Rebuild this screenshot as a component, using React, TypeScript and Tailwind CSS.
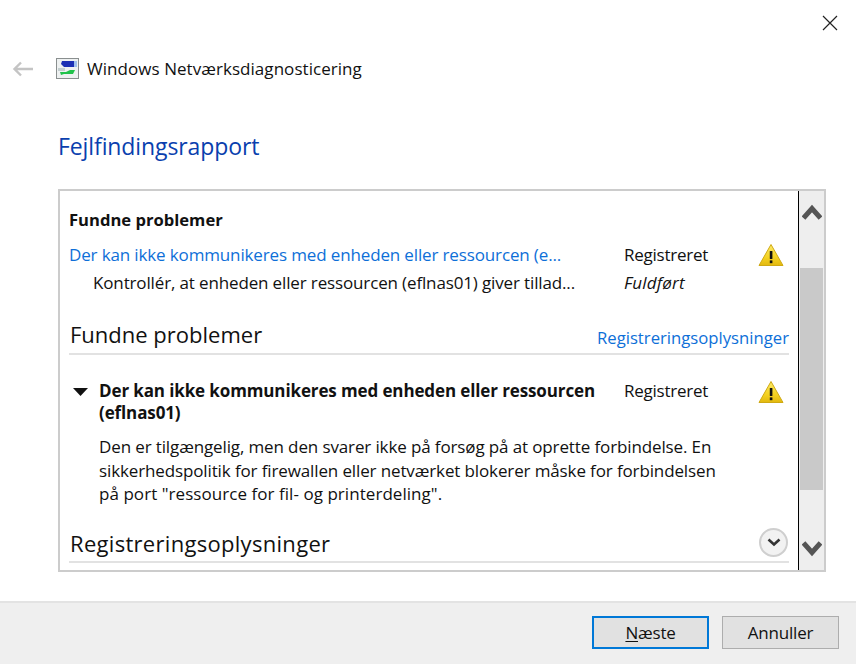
function Warn() {
  return (
    <svg width="26" height="24" viewBox="0 0 26 24" className="shrink-0">
      <defs>
        <linearGradient id="w" x1="0" y1="0" x2="0" y2="1">
          <stop offset="0" stopColor="#fbe96a" />
          <stop offset="0.6" stopColor="#f5d323" />
          <stop offset="1" stopColor="#e2b80f" />
        </linearGradient>
      </defs>
      <path d="M13 1.5 L25 22.5 H1 Z" fill="url(#w)" stroke="#cfa913" strokeWidth="1" strokeLinejoin="round" />
      <rect x="11.8" y="8" width="2.6" height="8" rx="0.6" fill="#111" />
      <rect x="11.8" y="17.4" width="2.6" height="2.8" fill="#111" />
    </svg>
  );
}

function AppIcon() {
  return (
    <svg width="24" height="22" viewBox="0 0 24 22">
      <rect x="0.5" y="0.5" width="22" height="20" fill="#eef1f1" stroke="#8a8f8f" />
      <path d="M6 3 H19 L18 9 H8 L5 6 Z" fill="#1c2fb4" />
      <rect x="18" y="3" width="3" height="6" fill="#9fc0ec" />
      <path d="M4 14 H10 L14 12 H19 L17 16 H8 L5 17 Z" fill="#1fc24a" />
      <rect x="2" y="10" width="7" height="3" fill="#c4cfd0" />
    </svg>
  );
}

export default function App() {
  return (
    <div className="flex h-[665px] w-[856px] flex-col bg-white font-['Open_Sans','Noto_Sans',sans-serif] text-[#111]">
      <div className="flex h-[49px] justify-end pr-[18px] pt-[15px]">
        <svg width="16" height="16" viewBox="0 0 16 16" fill="none" stroke="#222" strokeWidth="1.2">
          <path d="M1 1 L15 15 M15 1 L1 15" />
        </svg>
      </div>
      <div className="flex h-[40px] items-center pl-[12px]">
        <svg width="22" height="16" viewBox="0 0 22 16" fill="none" stroke="#c4c4c4" strokeWidth="2.4">
          <path d="M21 8 H2 M9 1.5 L2.5 8 L9 14.5" />
        </svg>
        <div className="ml-[22px]">
          <AppIcon />
        </div>
        <span className="ml-[7px] text-[17px] leading-[24px] tracking-[0.05px]">Windows Netværksdiagnosticering</span>
      </div>
      <h1 className="ml-[58px] mt-[41px] text-[23px] leading-[32px] tracking-[-0.1px] text-[#0a3fae]">Fejlfindingsrapport</h1>
      <div className="ml-[58px] mt-[27px] flex h-[383px] w-[768px] border-2 border-[#cccccc]">
        <div className="w-[738px] overflow-hidden pl-[9px] pr-[9px]">
          <div className="mt-[18px] text-[16.6px] font-bold leading-[22px]">Fundne problemer</div>
          <div className="mt-[12px] flex h-[24px] items-center text-[17px] leading-[24px] tracking-[-0.14px]">
            <span className="w-[555px] whitespace-nowrap text-[#0e6fd8]">Der kan ikke kommunikeres med enheden eller ressourcen (e...</span>
            <span className="w-[134px] tracking-[-0.25px]">Registreret</span>
            <Warn />
          </div>
          <div className="mt-[4px] flex h-[24px] items-center text-[17px] leading-[24px] tracking-[-0.14px]">
            <span className="w-[555px] whitespace-nowrap pl-[24px]">Kontrollér, at enheden eller ressourcen (eflnas01) giver tillad...</span>
            <span className="italic tracking-[0.2px]">Fuldført</span>
          </div>
          <div className="mt-[26px] flex h-[34px] items-end justify-between border-b-2 border-[#e2e2e2] pb-[4px]">
            <span className="ml-[1px] text-[22px] leading-[30px]">Fundne problemer</span>
            <span className="text-[16.7px] leading-[22px] text-[#0e6fd8]">Registreringsoplysninger</span>
          </div>
          <div className="mt-[25px] flex items-start">
            <svg width="15" height="9" viewBox="0 0 15 9" className="ml-[4px] mt-[8px] shrink-0">
              <path d="M0 0 H15 L7.5 8 Z" fill="#111" />
            </svg>
            <div className="ml-[11px] w-[525px] text-[17px] font-bold leading-[22px] tracking-[-0.12px]">
              Der kan ikke kommunikeres med enheden eller ressourcen (eflnas01)
            </div>
            <span className="w-[134px] text-[17px] leading-[22px] tracking-[-0.25px]">Registreret</span>
            <Warn />
          </div>
          <p className="ml-[30px] mt-[11px] whitespace-nowrap text-[17px] leading-[23.5px] tracking-[-0.125px]">
            Den er tilgængelig, men den svarer ikke på forsøg på at oprette forbindelse. En
            <br />
            sikkerhedspolitik for firewallen eller netværket blokerer måske for forbindelsen
            <br />
            <span className="tracking-[0.05px]">på port "ressource for fil- og printerdeling".</span>
          </p>
          <div className="mt-[19.5px] flex h-[38px] items-end justify-between border-b-2 border-[#e2e2e2] pb-[2px]">
            <span className="ml-[1px] text-[22px] leading-[32px] tracking-[0.3px]">Registreringsoplysninger</span>
            <span className="mb-[2px] mr-[1px] flex size-[29px] items-center justify-center rounded-full border-2 border-[#cfcfcf] bg-[#f2f2f2]">
              <svg width="14" height="9" viewBox="0 0 14 9" fill="none" stroke="#333" strokeWidth="2.6">
                <path d="M1.5 1.5 L7 6.5 L12.5 1.5" />
              </svg>
            </span>
          </div>
        </div>
        <div className="flex w-[26px] flex-col border-l border-black bg-[#eeeeee]">
          <div className="flex h-[77px] justify-center pt-[13px]">
            <svg width="20" height="16" viewBox="0 0 20 16" fill="none" stroke="#555" strokeWidth="5">
              <path d="M1.5 14 L10 4.5 L18.5 14" />
            </svg>
          </div>
          <div className="mx-[1px] h-[222px] bg-[#c9c9c9]" />
          <div className="flex flex-1 items-end justify-center pb-[13px]">
            <svg width="20" height="16" viewBox="0 0 20 16" fill="none" stroke="#555" strokeWidth="5">
              <path d="M1.5 2 L10 11.5 L18.5 2" />
            </svg>
          </div>
        </div>
      </div>
      <div className="mt-[29px] flex h-[63px] justify-end gap-[13px] border-t-2 border-[#e3e3e3] bg-[#efefef] pr-[17px] pt-[13px]">
        <button className="h-[33px] w-[117px] border-2 border-[#0078d7] bg-[#e1e1e1] text-[17px] leading-[22px] tracking-[-0.2px]">
          <span className="underline underline-offset-2">N</span>æste
        </button>
        <button className="h-[33px] w-[117px] border border-[#adadad] bg-[#e1e1e1] text-[17px] leading-[22px] tracking-[-0.2px]">
          Annuller
        </button>
      </div>
    </div>
  );
}
